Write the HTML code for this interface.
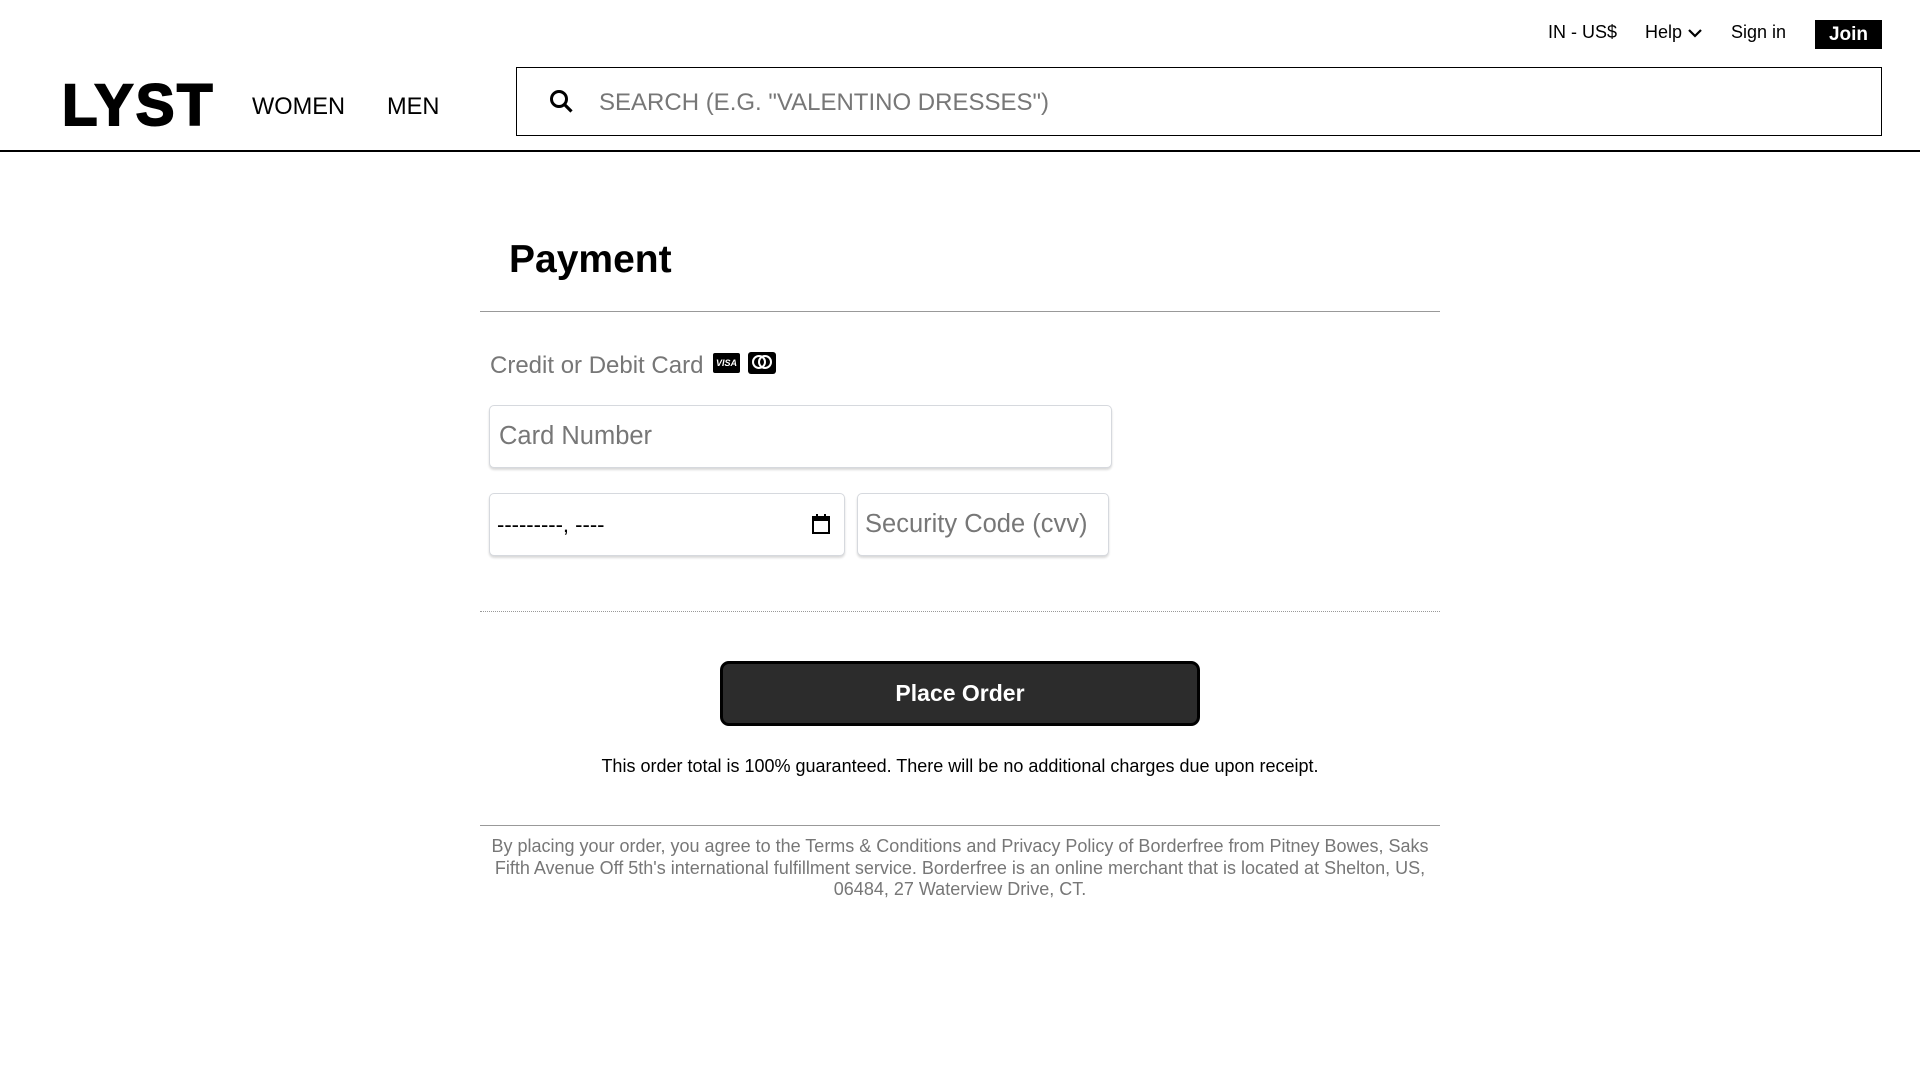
<!DOCTYPE html>
<html><head><meta charset="utf-8"><style>
*{margin:0;padding:0;box-sizing:border-box}
body{width:1920px;height:1080px;background:#fff;font-family:"Liberation Sans",Arial,sans-serif;position:relative;overflow:hidden;color:#000}
.a{position:absolute;white-space:nowrap}
.inp{position:absolute;border:1px solid #d6d9de;border-radius:5px;box-shadow:0 2px 2px rgba(0,0,0,.15);background:#fff}
</style></head><body>
<div class="a" style="left:1548px;top:22px;font-size:18px">IN - US$</div>
<div class="a" style="left:1645px;top:22px;font-size:18px">Help <svg width="16" height="12" viewBox="0 0 16 12" style="vertical-align:middle"><path d="M2 3l6 6 6-6" fill="none" stroke="#000" stroke-width="2.2"/></svg></div>
<div class="a" style="left:1731px;top:22px;font-size:18px">Sign in</div>
<div class="a" style="left:1815px;top:20px;width:67px;height:29px;background:#000;color:#fff;font-weight:bold;font-size:19px;text-align:center;line-height:29px">Join</div>
<div class="a" style="left:62px;top:76px;font-size:58px;font-weight:900;letter-spacing:2.5px;line-height:60px;-webkit-text-stroke:2px #000">LYST</div>
<div class="a" style="left:252px;top:94px;font-size:23.6px">WOMEN</div>
<div class="a" style="left:387px;top:94px;font-size:23.6px">MEN</div>
<div class="a" style="left:516px;top:67px;width:1366px;height:69px;border:1.5px solid #000"></div>
<svg class="a" style="left:549px;top:89px" width="26" height="26" viewBox="0 0 26 26"><circle cx="10" cy="10" r="7.5" fill="none" stroke="#000" stroke-width="3"/><path d="M15.5 15.5l7 7" stroke="#000" stroke-width="3.2"/></svg>
<div class="a" style="left:599px;top:89px;font-size:24px;color:#777">SEARCH (E.G. "VALENTINO DRESSES")</div>
<div class="a" style="left:0;top:150px;width:1920px;height:2px;background:#000"></div>
<div class="a" style="left:509px;top:238px;font-size:39px;font-weight:bold">Payment</div>
<div class="a" style="left:480px;top:311px;width:960px;height:1px;background:#999"></div>
<div class="a" style="left:490px;top:352px;font-size:24px;color:#777">Credit or Debit Card</div>
<div class="a" style="left:713px;top:353px;width:27px;height:20px;background:#000;border-radius:2px;color:#fff;font-size:9px;font-weight:bold;font-style:italic;text-align:center;line-height:20px">VISA</div>
<div class="a" style="left:748px;top:352px;width:28px;height:22px;background:#000;border-radius:3px"><svg width="28" height="22"><circle cx="11" cy="10" r="6" fill="none" stroke="#fff" stroke-width="2"/><circle cx="17" cy="10" r="6" fill="none" stroke="#fff" stroke-width="2"/></svg></div>
<div class="inp" style="left:489px;top:405px;width:623px;height:63px"></div>
<div class="a" style="left:499px;top:422px;font-size:25.5px;color:#777">Card Number</div>
<div class="inp" style="left:489px;top:493px;width:356px;height:63px"></div>
<div class="a" style="left:497px;top:512px;font-size:22px;color:#000">---------, ----</div>
<svg class="a" style="left:811px;top:513px" width="20" height="22" viewBox="0 0 20 22"><rect x="2" y="4" width="16" height="16" fill="none" stroke="#000" stroke-width="2"/><rect x="2" y="4" width="16" height="4" fill="#000"/><path d="M6 1v4M14 1v4" stroke="#000" stroke-width="2"/></svg>
<div class="inp" style="left:857px;top:493px;width:252px;height:63px"></div>
<div class="a" style="left:865px;top:510px;font-size:25.5px;color:#777">Security Code (cvv)</div>
<div class="a" style="left:480px;top:611px;width:960px;border-top:1px dotted #999"></div>
<div class="a" style="left:720px;top:661px;width:480px;height:65px;background:#2c2c2c;border:3px solid #000;border-radius:9px;color:#fff;font-weight:bold;font-size:23px;text-align:center;line-height:59px">Place Order</div>
<div class="a" style="left:480px;top:756px;width:960px;text-align:center;font-size:18px">This order total is 100% guaranteed. There will be no additional charges due upon receipt.</div>
<div class="a" style="left:480px;top:825px;width:960px;height:1px;background:#999"></div>
<div class="a" style="left:488px;top:836px;width:944px;white-space:normal;text-align:center;font-size:18px;line-height:21.5px;color:#777">By placing your order, you agree to the Terms &amp; Conditions and Privacy Policy of Borderfree from Pitney Bowes, Saks Fifth Avenue Off 5th's international fulfillment service. Borderfree is an online merchant that is located at Shelton, US, 06484, 27 Waterview Drive, CT.</div>
</body></html>
